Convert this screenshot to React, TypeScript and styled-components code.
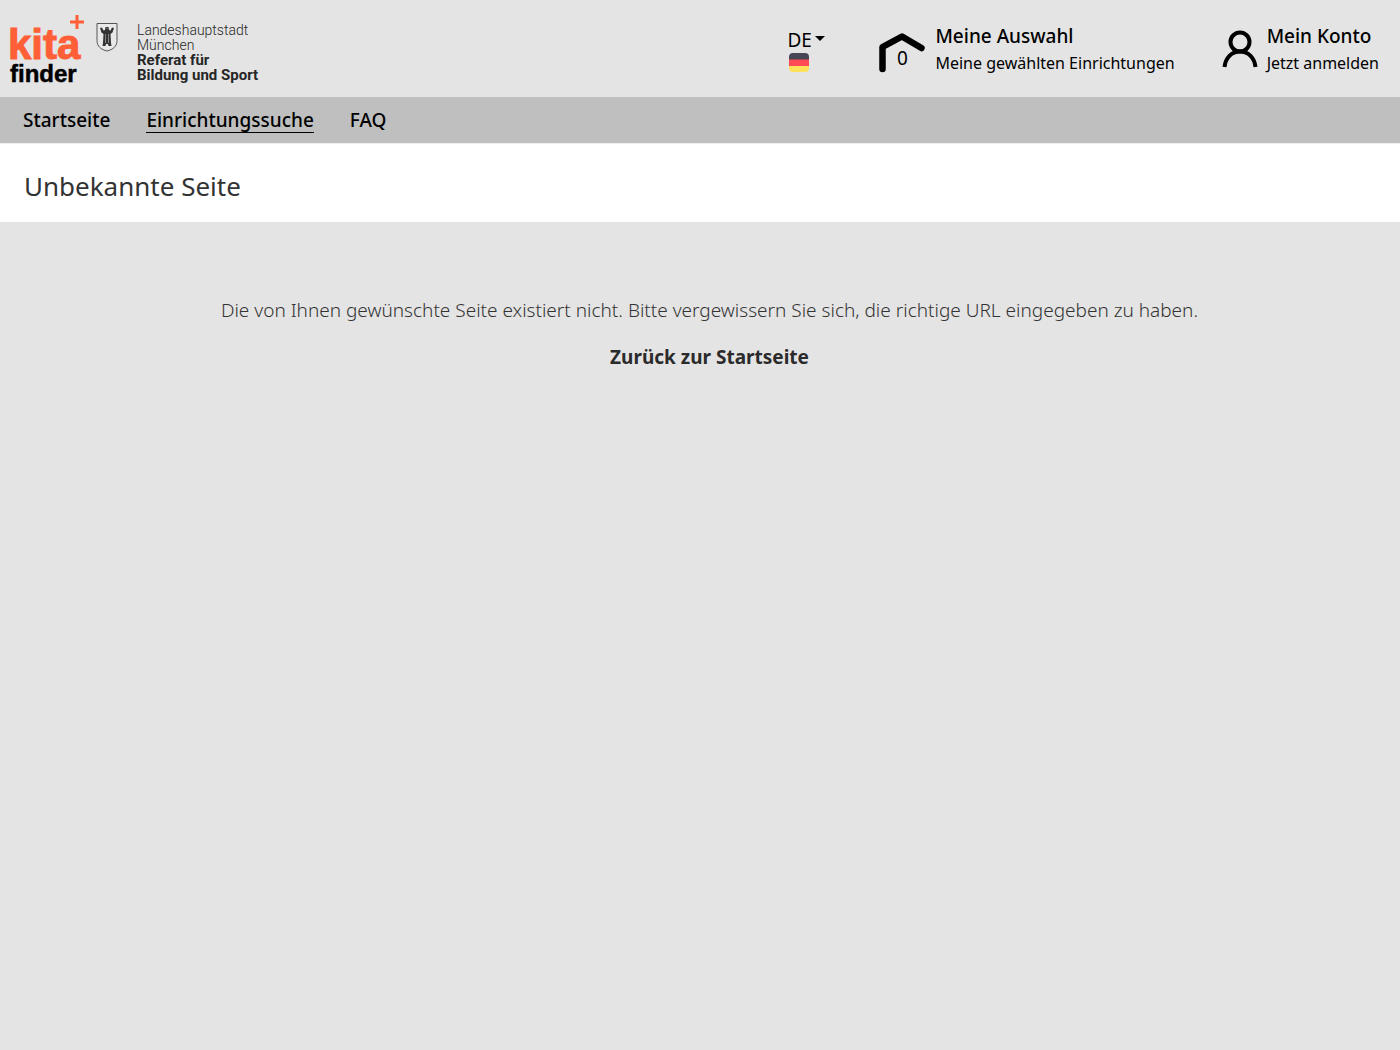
import React, { useState } from "react";
import styled, { createGlobalStyle } from "styled-components";

const GlobalStyle = createGlobalStyle`
  *, *::before, *::after { box-sizing: border-box; }
  body {
    margin: 0;
    background: #e4e4e4;
    color: #333;
    font-family: "Noto Sans", sans-serif;
    font-size: 19px;
    line-height: 26px;
  }
`;

const Header = styled.header`
  display: flex;
  justify-content: space-between;
  min-height: 97px;
  padding: 14px 21px 11px 10px;
`;

const Brand = styled.a`
  display: flex;
  color: #262626;
  text-decoration: none;
`;

const Logo = styled.svg`
  display: block;
  width: 76px;
  height: 72px;
  overflow: visible;
`;

const Crest = styled.svg`
  display: block;
  width: 22px;
  height: 30px;
  margin: 8px 19px 0 10px;
`;

const Department = styled.span`
  display: flex;
  flex-direction: column;
  padding-top: 9px;
  font-family: Roboto, sans-serif;
  font-size: 14px;
  font-weight: 300;
  line-height: 15px;
  white-space: nowrap;
`;

const DepartmentName = styled.strong`
  font-size: 15px;
  font-weight: 700;
`;

const Tools = styled.div`
  display: flex;
  align-items: flex-start;
  color: #000;
`;

const Language = styled.label`
  display: flex;
  flex-direction: column;
  margin: 13px 53px 0 0;
`;

const LanguageRow = styled.span`
  display: flex;
  align-items: center;
  gap: 4px;
`;

const LanguageSelect = styled.select`
  appearance: none;
  width: 24px;
  height: 26px;
  padding: 0;
  border: 0;
  background: none;
  color: #000;
  font: inherit;
  cursor: pointer;
`;

const Caret = styled.svg`
  width: 10px;
  height: 5px;
  margin-bottom: 3px;
`;

const Flag = styled.svg`
  width: 20px;
  height: 20px;
  margin-left: 2px;
`;

const ToolLink = styled.a`
  display: flex;
  gap: 9px;
  color: #000;
  text-decoration: none;
  white-space: nowrap;

  & + & { margin-left: 47px; }
`;

const ToolText = styled.span`
  display: flex;
  flex-direction: column;
  gap: 1px;
  margin-top: 9px;
`;

const ToolTitle = styled.span`
  font-weight: 500;
`;

const ToolHint = styled.span`
  font-size: 16px;
`;

const HouseBadge = styled.span`
  display: grid;
  width: 48px;
  margin-top: 18px;
`;

const HouseIcon = styled.svg`
  grid-area: 1 / 1;
  width: 48px;
  height: 42px;
`;

const HouseCount = styled.span`
  grid-area: 1 / 1;
  justify-self: center;
  padding-top: 13px;
`;

const PersonIcon = styled.svg`
  width: 36px;
  height: 40px;
  margin-top: 15px;
`;

const Nav = styled.nav`
  display: flex;
  align-items: flex-start;
  gap: 36px;
  height: 46px;
  padding: 10px 23px;
  background: #bfbfbf;
`;

const NavLink = styled.a<{ $active?: boolean }>`
  height: 26px;
  border-bottom: 1px solid ${({ $active }) => ($active ? "#000" : "transparent")};
  color: #000;
  font-weight: 500;
  text-decoration: none;
`;

const TitleBar = styled.div`
  padding: 25px 24px 18px;
  border-top: 1px solid #eee;
  background: #fff;
`;

const Title = styled.h1`
  margin: 0;
  font-size: 26px;
  font-weight: 400;
  line-height: 35px;
`;

const Main = styled.main`
  padding: 75px 0 20px 19px;
  text-align: center;
`;

const Message = styled.p`
  margin: 0 0 21px;
  font-weight: 300;
`;

const HomeLink = styled.a`
  color: #2b2b2b;
  font-weight: 700;
  text-decoration: none;
`;

export default function App() {
  const [language, setLanguage] = useState("DE");
  return (
    <>
      <GlobalStyle />
      <Header>
        <Brand href="#">
          <Logo viewBox="0 0 76 72" role="img" aria-label="kita finder+">
            <g fontFamily='"Liberation Sans", sans-serif' fontWeight="700">
              <text x="-2" y="45" fontSize="42" fill="#ff5f37" stroke="#ff5f37" strokeWidth="1">kita</text>
              <text x="0" y="68" fontSize="24" fill="#000" stroke="#000" strokeWidth="0.5">finder</text>
            </g>
            <path d="M67 1v14M60 8h14" stroke="#ff5f37" strokeWidth="3" />
          </Logo>
          <Crest viewBox="0 0 22 30" aria-hidden="true">
            <path d="M1 1.5h20v17c0 6-4 9-10 10.500C5 27.500 1 24.500 1 18.500z" fill="#e8e8e8" stroke="#555" strokeWidth="1" />
            <path d="M9.500 5h3l.5 3 1.500.500L16 5.500l2 .5-1.500 4.500-2 1.500.5 9 .5 3h-3l-.5-2h-2l-.5 2h-3l.5-3 .5-9-2-1.500L4 6l2-.5 1.500 3L9 8z" fill="#333" />
            <path d="M9.500 12v9M12.500 12v9M10.500 6.500h1" stroke="#aaa" strokeWidth="0.700" />
          </Crest>
          <Department>
            <span>Landeshauptstadt</span>
            <span>München</span>
            <DepartmentName>Referat für</DepartmentName>
            <DepartmentName>Bildung und Sport</DepartmentName>
          </Department>
        </Brand>
        <Tools>
          <Language>
            <LanguageRow>
              <LanguageSelect
                aria-label="Sprache"
                value={language}
                onChange={(event) => setLanguage(event.target.value)}
              >
                <option>DE</option>
              </LanguageSelect>
              <Caret viewBox="0 0 10 5" aria-hidden="true">
                <path d="M0 0h10L5 5z" />
              </Caret>
            </LanguageRow>
            <Flag viewBox="0 0 20 20" aria-hidden="true">
              <path d="M0 7V4a4 4 0 0 1 4-4h12a4 4 0 0 1 4 4v3z" fill="#464655" />
              <path d="M0 6.500h20v6.500H0z" fill="#ff4b55" />
              <path d="M0 13h20v2a4 4 0 0 1-4 4H4a4 4 0 0 1-4-4z" fill="#ffe15a" />
            </Flag>
          </Language>
          <ToolLink href="#auswahl">
            <HouseBadge>
              <HouseIcon viewBox="0 0 48 42" aria-hidden="true">
                <path d="M4.500 37V15L24 4.500 43.500 16" fill="none" stroke="#000" strokeWidth="6.500" strokeLinecap="round" strokeLinejoin="round" />
              </HouseIcon>
              <HouseCount>0</HouseCount>
            </HouseBadge>
            <ToolText>
              <ToolTitle>Meine Auswahl</ToolTitle>
              <ToolHint>Meine gewählten Einrichtungen</ToolHint>
            </ToolText>
          </ToolLink>
          <ToolLink href="#konto">
            <PersonIcon viewBox="0 0 36 40" aria-hidden="true">
              <g fill="none" stroke="#000" strokeWidth="4">
                <circle cx="18" cy="13" r="9.500" />
                <path d="M2.500 38C3.500 29 9.500 22.500 18 22.500S32.500 29 33.500 38" />
              </g>
            </PersonIcon>
            <ToolText>
              <ToolTitle>Mein Konto</ToolTitle>
              <ToolHint>Jetzt anmelden</ToolHint>
            </ToolText>
          </ToolLink>
        </Tools>
      </Header>
      <Nav>
        <NavLink href="#start">Startseite</NavLink>
        <NavLink href="#suche" $active aria-current="page">Einrichtungssuche</NavLink>
        <NavLink href="#faq">FAQ</NavLink>
      </Nav>
      <TitleBar>
        <Title>Unbekannte Seite</Title>
      </TitleBar>
      <Main>
        <Message>
          Die von Ihnen gewünschte Seite existiert nicht. Bitte vergewissern Sie sich, die richtige URL eingegeben zu haben.
        </Message>
        <HomeLink href="#start">Zurück zur Startseite</HomeLink>
      </Main>
    </>
  );
}
